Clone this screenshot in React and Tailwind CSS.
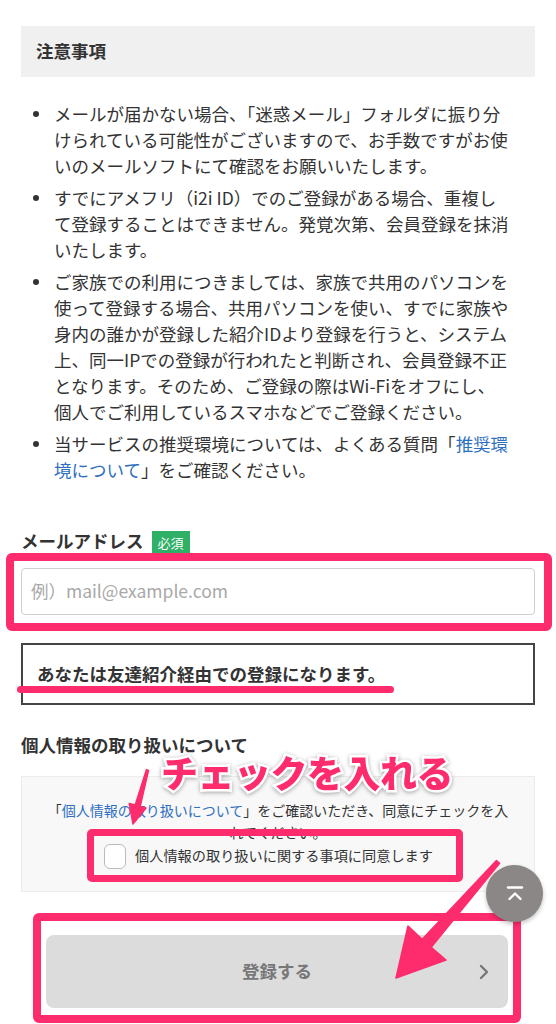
import React from "react";

const PINK = "#fe2c6d";

function Bullet({ children, first }) {
  return (
    <li className={`flex ${first ? "" : "mt-[6px]"}`}>
      <span className="w-[21px] shrink-0 h-[26px] flex items-center">
        <span className="block w-[6px] h-[6px] rounded-full bg-[#333]" />
      </span>
      <span className="leading-[26px]">{children}</span>
    </li>
  );
}

export default function App() {
  return (
    <div
      className="relative w-[556px] h-[1024px] overflow-hidden bg-white text-[#333] text-[17.5px]"
      style={{ fontFamily: "'Noto Sans CJK JP', 'Noto Sans', sans-serif" }}
    >
      <div className="px-[21px] pt-[26px]">
        <div className="h-[51px] bg-[#f0f0f0] px-[15px] flex items-center font-bold">
          注意事項
        </div>

        <ul className="mt-[24px] pl-[12px]">
          <Bullet first>
            メールが届かない場合、「迷惑メール」フォルダに振り分
            <br />
            けられている可能性がございますので、お手数ですがお使
            <br />
            いのメールソフトにて確認をお願いいたします。
          </Bullet>
          <Bullet>
            すでにアメフリ（i2i ID）でのご登録がある場合、重複し
            <br />
            て登録することはできません。発覚次第、会員登録を抹消
            <br />
            いたします。
          </Bullet>
          <Bullet>
            ご家族での利用につきましては、家族で共用のパソコンを
            <br />
            使って登録する場合、共用パソコンを使い、すでに家族や
            <br />
            身内の誰かが登録した紹介IDより登録を行うと、システム
            <br />
            上、同一IPでの登録が行われたと判断され、会員登録不正
            <br />
            となります。そのため、ご登録の際はWi-Fiをオフにし、
            <br />
            個人でご利用しているスマホなどでご登録ください。
          </Bullet>
          <Bullet>
            当サービスの推奨環境については、よくある質問「
            <span className="text-[#2f6fbf]">推奨環</span>
            <br />
            <span className="text-[#2f6fbf]">境について</span>」をご確認ください。
          </Bullet>
        </ul>

        <div className="mt-[45px] h-[26px] flex items-center gap-[8px]">
          <span className="font-bold leading-[26px]">メールアドレス</span>
          <span className="h-[24px] w-[38px] bg-[#2fb067] text-white text-[13px] flex items-center justify-center mt-[3px]">
            必須
          </span>
        </div>

        <div className="mt-[14px] h-[47px] border border-[#cfcfcf] rounded-[4px] flex items-center px-[9px] text-[#a8a8a8]">
          例）mail@example.com
        </div>

        <div className="mt-[28px] h-[62px] border-2 border-[#444] flex items-center pl-[14px] font-bold">
          あなたは友達紹介経由での登録になります。
        </div>

        <div className="mt-[27px] leading-[26px] font-bold">個人情報の取り扱いについて</div>

        <div className="mt-[18px] h-[116px] bg-[#f8f8f8] border border-[#ececec] px-[22px] pt-[22px]">
          <p className="text-[14px] leading-[22px] text-center">
            「<span className="text-[#2f6fbf]">個人情報の取り扱いについて</span>」をご確認いただき、同意にチェックを入れてください。
          </p>
          <div className="h-[26px] flex items-center gap-[9px] pl-[60px]">
            <span className="w-[22px] h-[25px] rounded-[6px] border border-[#bbb] bg-white shrink-0" />
            <span className="text-[14.2px]">個人情報の取り扱いに関する事項に同意します</span>
          </div>
        </div>

        <div className="mt-[43px] ml-[25px] w-[462px] h-[73px] rounded-[8px] bg-[#dcdcdc] relative flex items-center justify-center">
          <span className="font-bold text-[#777]">登録する</span>
          <svg
            className="absolute right-[18px] top-1/2 -translate-y-1/2"
            width="12"
            height="18"
            viewBox="0 0 12 18"
            fill="none"
          >
            <path d="M3 3l6 6-6 6" stroke="#777" strokeWidth="2.4" strokeLinecap="round" strokeLinejoin="round" />
          </svg>
        </div>
      </div>

      {/* annotation overlays */}
      <div
        className="absolute left-[6px] top-[553px] w-[546px] h-[78px] border-[8px] rounded-[6px] pointer-events-none"
        style={{ borderColor: PINK }}
      />
      <div
        className="absolute left-[17px] top-[686px] w-[377px] h-[7px] rounded-full pointer-events-none"
        style={{ backgroundColor: PINK }}
      />
      <div
        className="absolute left-[87px] top-[829px] w-[376px] h-[53px] border-[7px] rounded-[5px] pointer-events-none"
        style={{ borderColor: PINK }}
      />
      <div
        className="absolute left-[33px] top-[913px] w-[488px] h-[110px] border-[8px] rounded-[6px] pointer-events-none"
        style={{ borderColor: PINK }}
      />

      <div
        className="absolute left-[161px] top-[750px] text-[37px] leading-[44px] font-black tracking-[-0.5px] [paint-order:stroke_fill] [-webkit-text-stroke:5px_#fff] drop-shadow-[0_1px_2px_rgba(0,0,0,0.35)] pointer-events-none"
        style={{ color: PINK }}
      >
        チェックを入れる
      </div>

      {/* scroll-to-top button */}
      <div className="absolute left-[486px] top-[865px] w-[57px] h-[57px] rounded-full bg-[#8a8786] shadow-[0_2px_4px_rgba(0,0,0,0.25)] flex items-center justify-center">
        <svg width="18" height="18" viewBox="0 0 18 18" fill="none">
          <path d="M2 2.5h14" stroke="#fff" strokeWidth="2.4" strokeLinecap="round" />
          <path d="M3.5 14l5.5-5.5 5.5 5.5" stroke="#fff" strokeWidth="2.4" strokeLinecap="round" strokeLinejoin="round" />
        </svg>
      </div>

      <svg
        className="absolute left-0 top-0 pointer-events-none"
        width="556"
        height="1024"
        viewBox="0 0 556 1024"
      >
        <g fill={PINK} stroke={PINK} strokeWidth="1.5" strokeLinejoin="round">
          <polygon points="148.5,770.4 140.2,806.4 146,808 133,824 129.2,803.4 135.2,805.0 146.5,769.6" />
          <polygon points="499.6,863.4 431.2,947.2 446,960 396,978 408,926 422.2,939.2 496.4,860.6" />
        </g>
      </svg>
    </div>
  );
}
